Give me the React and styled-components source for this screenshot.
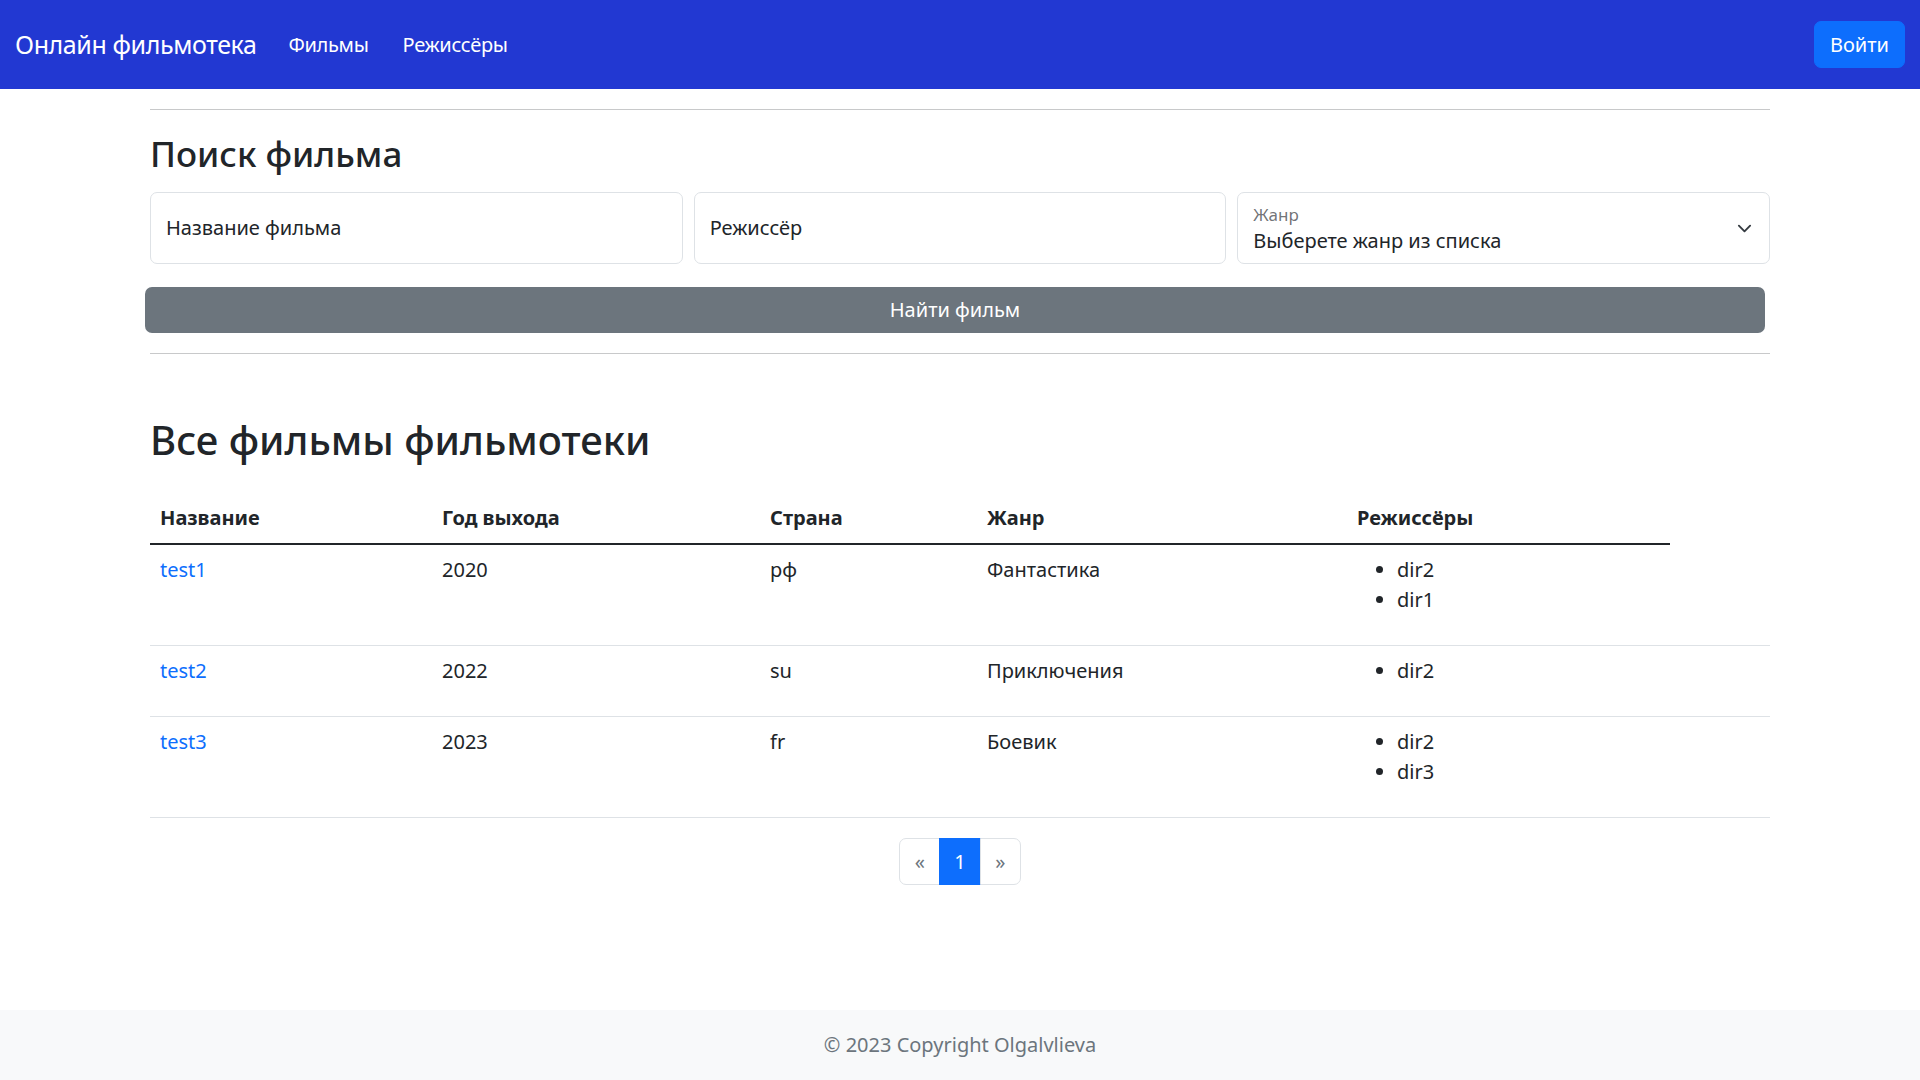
import React from 'react';
import styled, { createGlobalStyle } from 'styled-components';

const GlobalStyle = createGlobalStyle`
  body {
    margin: 0;
    font-family: "Noto Sans", "Open Sans", sans-serif;
    font-size: 20px;
    line-height: 1.5;
    color: #212529;
    background: #fff;
  }
  * { box-sizing: border-box; }
`;

const Page = styled.div`
  min-height: 100vh;
  display: flex;
  flex-direction: column;
`;

const Navbar = styled.nav`
  height: 89px;
  background: #2238d2;
  display: flex;
  align-items: center;
  padding: 0 15px;
`;

const Brand = styled.a`
  font-size: 25px;
  letter-spacing: -0.4px;
  color: #fff;
  text-decoration: none;
  margin-right: 15px;
`;

const NavLink = styled.a`
  font-size: 20px;
  letter-spacing: -0.3px;
  color: #fff;
  text-decoration: none;
  padding: 0 17px;
`;

const LoginButton = styled.button`
  margin-left: auto;
  height: 47px;
  padding: 0 15px;
  border: 1px solid #0d6efd;
  border-radius: 7px;
  background: #0d6efd;
  color: #fff;
  font: inherit;
  font-size: 20px;
`;

const Container = styled.main`
  width: 100%;
  max-width: 1650px;
  margin: 0 auto;
  padding: 0 15px;
`;

const Rule = styled.hr`
  margin: 20px 0;
  border: 0;
  border-top: 1px solid #c8c9ca;
`;

const Title = styled.h2`
  font-size: 35px;
  font-weight: 500;
  line-height: 1.2;
  margin: 23px 0 17px;
`;

const BigTitle = styled.h1`
  font-size: 40px;
  font-weight: 500;
  line-height: 1.2;
  margin: 62px 0 29px;
`;

const FieldRow = styled.div`
  display: grid;
  grid-template-columns: repeat(3, 1fr);
  gap: 11px;
`;

const Field = styled.div`
  height: 72px;
  border: 1px solid #dee2e6;
  border-radius: 7px;
  padding: 0 15px;
  display: flex;
  align-items: center;
  background: #fff;
`;

const SelectField = styled(Field)`
  align-items: flex-start;
  padding-top: 11px;
`;

const SelectText = styled.div`
  flex: 1;
  display: flex;
  flex-direction: column;
`;

const SmallLabel = styled.span`
  font-size: 17px;
  line-height: 22px;
  color: rgba(33, 37, 41, 0.65);
`;

const Chevron = styled.svg`
  align-self: center;
  margin-top: -11px;
  width: 15px;
  height: 15px;
  margin-right: 2px;
`;

const SearchButton = styled.button`
  display: block;
  width: 100%;
  height: 46px;
  margin: 23px 0 0 -5px;
  border: 0;
  border-radius: 7px;
  background: #6c757d;
  color: #fff;
  font: inherit;
  font-size: 20px;
`;

const Table = styled.table`
  width: 100%;
  border-collapse: collapse;
  margin-bottom: 20px;
`;

const Th = styled.th`
  text-align: left;
  font-weight: 700;
  padding: 10px;
  border-bottom: 2px solid #212529;
  width: ${p => p.w}px;
`;

const Td = styled.td`
  padding: 10px;
  vertical-align: top;
  border-bottom: 1px solid #dee2e6;
`;

const FilmLink = styled.a`
  color: #0d6efd;
  text-decoration: none;
`;

const DirList = styled.ul`
  margin: 0 0 20px;
  padding-left: 40px;
`;

const Pagination = styled.div`
  display: flex;
  justify-content: center;
  margin-bottom: 40px;
`;

const PageItem = styled.span`
  height: 47px;
  min-width: 41px;
  padding: 0 14px;
  display: flex;
  align-items: center;
  justify-content: center;
  font-size: 20px;
  border: 1px solid ${p => (p.active ? '#0d6efd' : '#dee2e6')};
  background: ${p => (p.active ? '#0d6efd' : '#fff')};
  color: ${p => (p.active ? '#fff' : '#6c757d')};
  margin-left: -1px;
  &:first-child { border-radius: 7px 0 0 7px; margin-left: 0; }
  &:last-child { border-radius: 0 7px 7px 0; }
`;

const Footer = styled.footer`
  margin-top: auto;
  background: #f8f9fa;
  padding: 20px;
  text-align: center;
  color: #6c757d;
`;

const films = [
  { name: 'test1', year: 2020, country: 'рф', genre: 'Фантастика', dirs: ['dir2', 'dir1'] },
  { name: 'test2', year: 2022, country: 'su', genre: 'Приключения', dirs: ['dir2'] },
  { name: 'test3', year: 2023, country: 'fr', genre: 'Боевик', dirs: ['dir2', 'dir3'] },
];

const columns = [
  ['Название', 282],
  ['Год выхода', 328],
  ['Страна', 217],
  ['Жанр', 370],
  ['Режиссёры', 323],
];

export default function App() {
  return (
    <Page>
      <GlobalStyle />
      <Navbar>
        <Brand href="#">Онлайн фильмотека</Brand>
        <NavLink href="#">Фильмы</NavLink>
        <NavLink href="#">Режиссёры</NavLink>
        <LoginButton>Войти</LoginButton>
      </Navbar>

      <Container>
        <Rule />
        <Title>Поиск фильма</Title>
        <FieldRow>
          <Field>Название фильма</Field>
          <Field>Режиссёр</Field>
          <SelectField>
            <SelectText>
              <SmallLabel>Жанр</SmallLabel>
              <span>Выберете жанр из списка</span>
            </SelectText>
            <Chevron viewBox="0 0 16 16">
              <path d="m2 5 6 6 6-6" fill="none" stroke="#343a40" strokeWidth="2" strokeLinecap="round" strokeLinejoin="round" />
            </Chevron>
          </SelectField>
        </FieldRow>
        <SearchButton>Найти фильм</SearchButton>
        <Rule />

        <BigTitle>Все фильмы фильмотеки</BigTitle>
        <Table>
          <thead>
            <tr>
              {columns.map(([label, w]) => (
                <Th key={label} w={w}>{label}</Th>
              ))}
            </tr>
          </thead>
          <tbody>
            {films.map(f => (
              <tr key={f.name}>
                <Td><FilmLink href="#">{f.name}</FilmLink></Td>
                <Td>{f.year}</Td>
                <Td>{f.country}</Td>
                <Td>{f.genre}</Td>
                <Td>
                  <DirList>
                    {f.dirs.map(d => <li key={d}>{d}</li>)}
                  </DirList>
                </Td>
                <Td />
              </tr>
            ))}
          </tbody>
        </Table>

        <Pagination>
          <PageItem>«</PageItem>
          <PageItem active>1</PageItem>
          <PageItem>»</PageItem>
        </Pagination>
      </Container>

      <Footer>© 2023 Copyright Olgalvlieva</Footer>
    </Page>
  );
}
